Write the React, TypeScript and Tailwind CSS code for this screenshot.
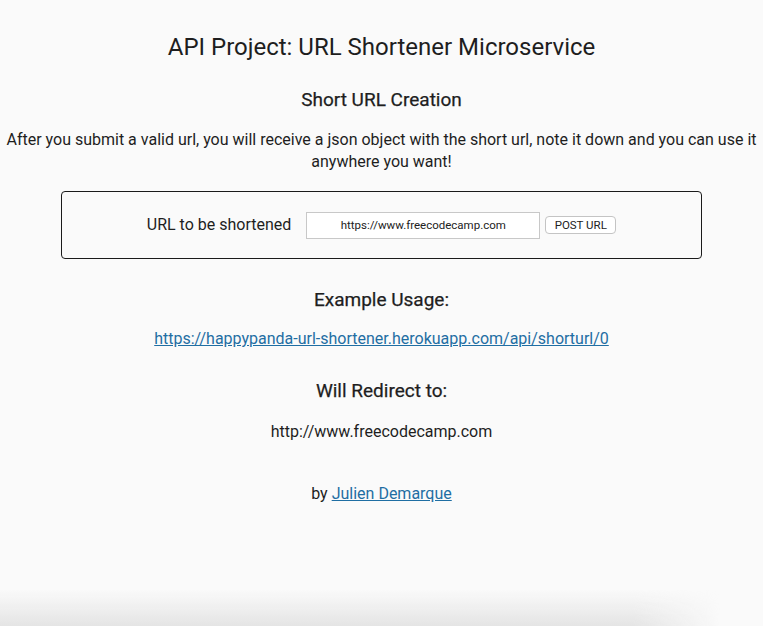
import React from "react";

export default function App() {
  return (
    <div
      className="min-h-screen bg-[#fafafa] text-[#1e1e1e] flex flex-col"
      style={{ fontFamily: "Roboto, 'Liberation Sans', sans-serif" }}
    >
      <div className="flex-1 text-center px-[4px]">
        <h1 className="mt-[31px] text-[24px] leading-[32px] font-normal">
          API Project: URL Shortener Microservice
        </h1>
        <h3 className="mt-[25px] text-[19px] leading-[24px] font-normal [-webkit-text-stroke:0.25px_#1e1e1e]">
          Short URL Creation
        </h3>
        <p className="mt-[17px] text-[16px] leading-[22px]">
          After you submit a valid url, you will receive a json object with the short url, note it down and you can use it anywhere you want!
        </p>
        <div className="mt-[18px] mx-auto w-[641px] h-[68px] border border-[#1a1a1a] rounded-[4px] flex items-center justify-center">
          <div className="flex items-center">
            <label className="text-[16px] leading-[20px]">URL to be shortened</label>
            <input
              readOnly
              value="https://www.freecodecamp.com"
              className="ml-[15px] w-[234px] h-[27px] bg-white border border-[#c8c8c8] text-center text-[11.5px] text-[#222] outline-none"
              style={{ fontFamily: "Roboto, 'Liberation Sans', sans-serif" }}
            />
            <button
              className="ml-[5px] w-[71px] h-[18px] bg-white border border-[#c4c4c4] rounded-[4px] text-[11.5px] leading-[16px] text-[#222]"
              style={{ fontFamily: "Roboto, 'Liberation Sans', sans-serif" }}
            >
              POST URL
            </button>
          </div>
        </div>
        <h3 className="mt-[29px] text-[19px] leading-[24px] font-normal [-webkit-text-stroke:0.25px_#1e1e1e]">
          Example Usage:
        </h3>
        <div className="mt-[15px] text-[16px] leading-[24px]">
          <a href="#" className="text-[#1f6ea3] underline">
            https://happypanda-url-shortener.herokuapp.com/api/shorturl/0
          </a>
        </div>
        <h3 className="mt-[28px] text-[19px] leading-[24px] font-normal [-webkit-text-stroke:0.25px_#1e1e1e]">
          Will Redirect to:
        </h3>
        <p className="mt-[17px] text-[16px] leading-[24px]">
          http://www.freecodecamp.com
        </p>
        <p className="mt-[38px] text-[16px] leading-[24px]">
          by{" "}
          <a href="#" className="text-[#1f6ea3] underline">
            Julien Demarque
          </a>
        </p>
      </div>
      <div className="h-[36px] w-[720px] bg-gradient-to-b from-transparent to-[#e4e4e4] [mask-image:linear-gradient(to_right,black_88%,transparent)]" />
    </div>
  );
}
